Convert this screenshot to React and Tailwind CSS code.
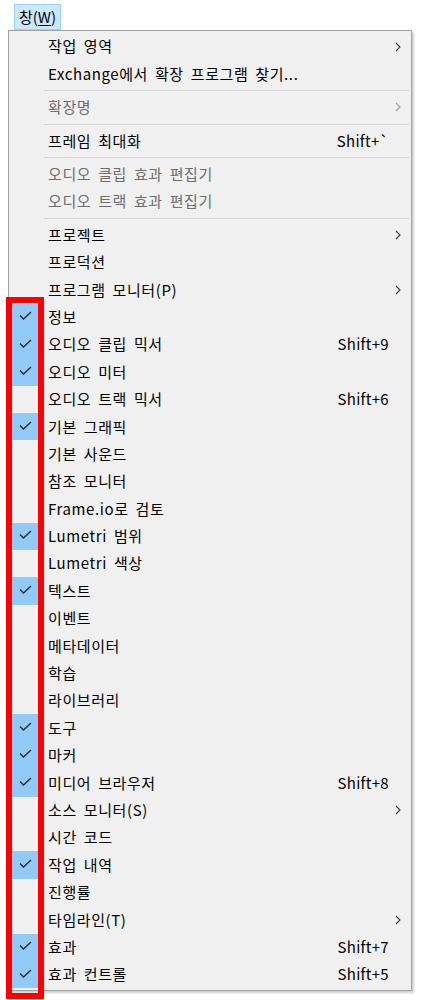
import React from 'react';

const items = [
  { label: '작업 영역', sub: true },
  { label: 'Exchange에서 확장 프로그램 찾기...', sep: true },
  { label: '확장명', sub: true, disabled: true, sep: true },
  { label: '프레임 최대화', key: 'Shift+`', sep: true },
  { label: '오디오 클립 효과 편집기', disabled: true },
  { label: '오디오 트랙 효과 편집기', disabled: true, sep: true },
  { label: '프로젝트', sub: true },
  { label: '프로덕션' },
  { label: '프로그램 모니터(P)', sub: true },
  { label: '정보', checked: true },
  { label: '오디오 클립 믹서', checked: true, key: 'Shift+9' },
  { label: '오디오 미터', checked: true },
  { label: '오디오 트랙 믹서', key: 'Shift+6' },
  { label: '기본 그래픽', checked: true },
  { label: '기본 사운드' },
  { label: '참조 모니터' },
  { label: 'Frame.io로 검토' },
  { label: 'Lumetri 범위', checked: true },
  { label: 'Lumetri 색상' },
  { label: '텍스트', checked: true },
  { label: '이벤트' },
  { label: '메타데이터' },
  { label: '학습' },
  { label: '라이브러리' },
  { label: '도구', checked: true },
  { label: '마커', checked: true },
  { label: '미디어 브라우저', checked: true, key: 'Shift+8' },
  { label: '소스 모니터(S)', sub: true },
  { label: '시간 코드' },
  { label: '작업 내역', checked: true },
  { label: '진행률' },
  { label: '타임라인(T)', sub: true },
  { label: '효과', checked: true, key: 'Shift+7' },
  { label: '효과 컨트롤', checked: true, key: 'Shift+5' },
];

function Check() {
  return (
    <svg width="13" height="9" viewBox="0 0 13 9" className="-mt-[3px]">
      <polyline points="1,4.5 4.5,8 12,1" fill="none" stroke="#2b2b2b" strokeWidth="1.3" />
    </svg>
  );
}

function Chevron({ disabled }) {
  return (
    <svg width="6" height="10" viewBox="0 0 6 10">
      <polyline points="1,1 5,5 1,9" fill="none" stroke={disabled ? '#a0a0a0' : '#3c3c3c'} strokeWidth="1.1" />
    </svg>
  );
}

function MenuRow({ item }) {
  return (
    <>
      <div className={`flex h-[27.4px] items-center ${item.disabled ? 'text-[#6d6d6d]' : 'text-black'}`}>
        <div className="flex h-full w-[39px] shrink-0 items-stretch">
          {item.checked ? (
            <div className="ml-[1px] flex w-[31px] items-center justify-center bg-[#91c9f7]">
              <Check />
            </div>
          ) : null}
        </div>
        <span className="flex-1 whitespace-nowrap tracking-[0.6px] [word-spacing:3px]">{item.label}</span>
        {item.key ? <span className="whitespace-nowrap tracking-[0.3px]">{item.key}</span> : null}
        <span className="flex w-[22px] shrink-0 justify-start pl-[6px]">
          {item.sub ? <Chevron disabled={item.disabled} /> : null}
        </span>
      </div>
      {item.sep ? (
        <div className="flex h-[6px] items-center pl-[35px] pr-[2px]">
          <div className="h-px w-full bg-[#d5d5d5]" />
        </div>
      ) : null}
    </>
  );
}

export default function App() {
  return (
    <div className="relative h-[1000px] w-[423px] overflow-hidden bg-white text-[15px] font-['Noto_Sans_CJK_KR','Noto_Sans',sans-serif]">
      <div className="pl-[14px] pt-[4px]">
        <span className="flex h-[26px] w-[47px] items-center justify-center border border-[#99d1ff] bg-[#cce8ff] text-black">
          창(<span className="underline underline-offset-2">W</span>)
        </span>
      </div>

      <div className="ml-[8px] w-[404px] border border-[#a0a0a0] bg-[#f0f0f0] py-[2px] shadow-[2px_2px_2px_rgba(0,0,0,0.2)]">
        {items.map((item) => <MenuRow key={item.label} item={item} />)}
      </div>

      <div className="pointer-events-none absolute left-[6px] top-[297px] h-[702px] w-[38px] border-[6px] border-[#ff0000]" />
    </div>
  );
}
